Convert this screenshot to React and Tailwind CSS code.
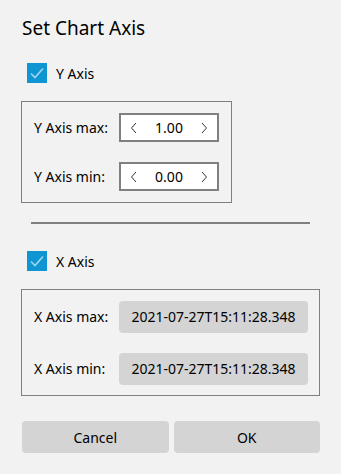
import React from "react";

function Check({ label }) {
  return (
    <div className="flex items-center gap-[9px] pl-[27px] h-[20px]">
      <div className="w-5 h-5 bg-[#0f96d2] flex items-center justify-center">
        <svg width="16" height="16" viewBox="0 0 16 16">
          <path d="M2 8.5 L6 12.5 L14 3.5" fill="none" stroke="#9fd6f0" strokeWidth="1.6" />
        </svg>
      </div>
      <span className="text-[14px] text-black">{label}</span>
    </div>
  );
}

function Chevron({ dir }) {
  return (
    <svg width="7" height="12" viewBox="0 0 7 12">
      <path
        d={dir === "left" ? "M6 1 L1.5 6 L6 11" : "M1 1 L5.5 6 L1 11"}
        fill="none"
        stroke="#333"
        strokeWidth="1"
      />
    </svg>
  );
}

function SpinBox({ value }) {
  return (
    <div className="w-[100px] h-[29px] border-2 border-[#808080] bg-white flex items-center justify-between pl-[9px] pr-[9px] text-[14px]">
      <Chevron dir="left" />
      <span className="text-black">{value}</span>
      <Chevron dir="right" />
    </div>
  );
}

function ReadField({ value }) {
  return (
    <div className="w-[189px] h-[32px] rounded bg-[#d4d4d4] flex items-center justify-center text-[14px] text-black">
      {value}
    </div>
  );
}

export default function App() {
  const stamp = "2021-07-27T15:11:28.348";
  return (
    <div
      className="w-[341px] h-[474px] bg-[#f2f2f2] text-black"
      style={{ fontFamily: '"Noto Sans", "Open Sans", sans-serif' }}
    >
      <div className="pl-[22px] pt-[16px] text-[19px] leading-[24px]">Set Chart Axis</div>

      <div className="mt-[23px]">
        <Check label="Y Axis" />
      </div>

      <div className="ml-[21px] mt-[18px] w-[211px] h-[102px] border border-[#808080] flex flex-col justify-center gap-[20px] pl-[12px]">
        <div className="flex items-center justify-between pr-[12px]">
          <span className="text-[14px]">Y Axis max:</span>
          <SpinBox value="1.00" />
        </div>
        <div className="flex items-center justify-between pr-[12px]">
          <span className="text-[14px]">Y Axis min:</span>
          <SpinBox value="0.00" />
        </div>
      </div>

      <div className="ml-[31px] mt-[19px] w-[279px] h-[2px] bg-[#808080]" />

      <div className="mt-[27px]">
        <Check label="X Axis" />
      </div>

      <div className="ml-[21px] mt-[18px] w-[299px] h-[107px] border border-[#808080] flex flex-col justify-center gap-[20px] pl-[12px]">
        <div className="flex items-center justify-between pr-[11px]">
          <span className="text-[14px]">X Axis max:</span>
          <ReadField value={stamp} />
        </div>
        <div className="flex items-center justify-between pr-[11px]">
          <span className="text-[14px]">X Axis min:</span>
          <ReadField value={stamp} />
        </div>
      </div>

      <div className="ml-[22px] mt-[25px] w-[298px] flex gap-[5px]">
        <button className="flex-1 h-[32px] rounded bg-[#d4d4d4] text-[14px]">Cancel</button>
        <button className="flex-1 h-[32px] rounded bg-[#d4d4d4] text-[14px]">OK</button>
      </div>
    </div>
  );
}
